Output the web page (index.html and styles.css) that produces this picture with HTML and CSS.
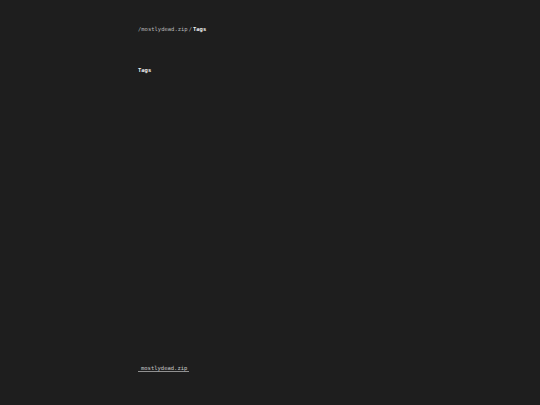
FILE: index.html
```html
<!DOCTYPE html>
<html>
<head>
<meta charset="utf-8">
<link rel="stylesheet" href="styles.css">
</head>
<body>
<div class="page">
  <nav class="crumbs"><a class="crumb-link" href="#">/mostlydead.zip</a><span class="sep">/</span><span class="current">Tags</span></nav>
  <main class="content">
    <h1 class="title">Tags</h1>
  </main>
  <footer class="footer"><a class="foot-link" href="#">mostlydead.zip</a></footer>
</div>
</body>
</html>
```
FILE: styles.css
```css
html, body { margin: 0; padding: 0; }
body {
  background: #1e1e1e;
  color: #c8c8c8;
  font-family: "DejaVu Sans Mono", monospace;
  font-size: 5.5px;
  width: 540px;
  height: 405px;
  overflow: hidden;
}
.page {
  width: 264px;
  margin: 0 auto;
  height: 405px;
  display: flex;
  flex-direction: column;
}
.crumbs {
  padding-top: 26px;
  line-height: 6px;
  display: flex;
  align-items: baseline;
}
.crumb-link { color: #b8b8b8; text-decoration: none; }
.sep { color: #b8b8b8; margin: 0 1px 0 1px; }
.current { color: #f0f0f0; font-weight: bold; }
.content { flex: 1; padding-top: 35px; }
.title {
  margin: 0;
  font-weight: bold;
  font-size: 5.5px;
  line-height: 6px;
  color: #f0f0f0;
}
.footer { padding-bottom: 34px; line-height: 6px; }
.foot-link {
  color: #c8c8c8;
  text-decoration: none;
  padding: 0 2px 0 3px;
  border-bottom: 1px solid #909090;
}
```
